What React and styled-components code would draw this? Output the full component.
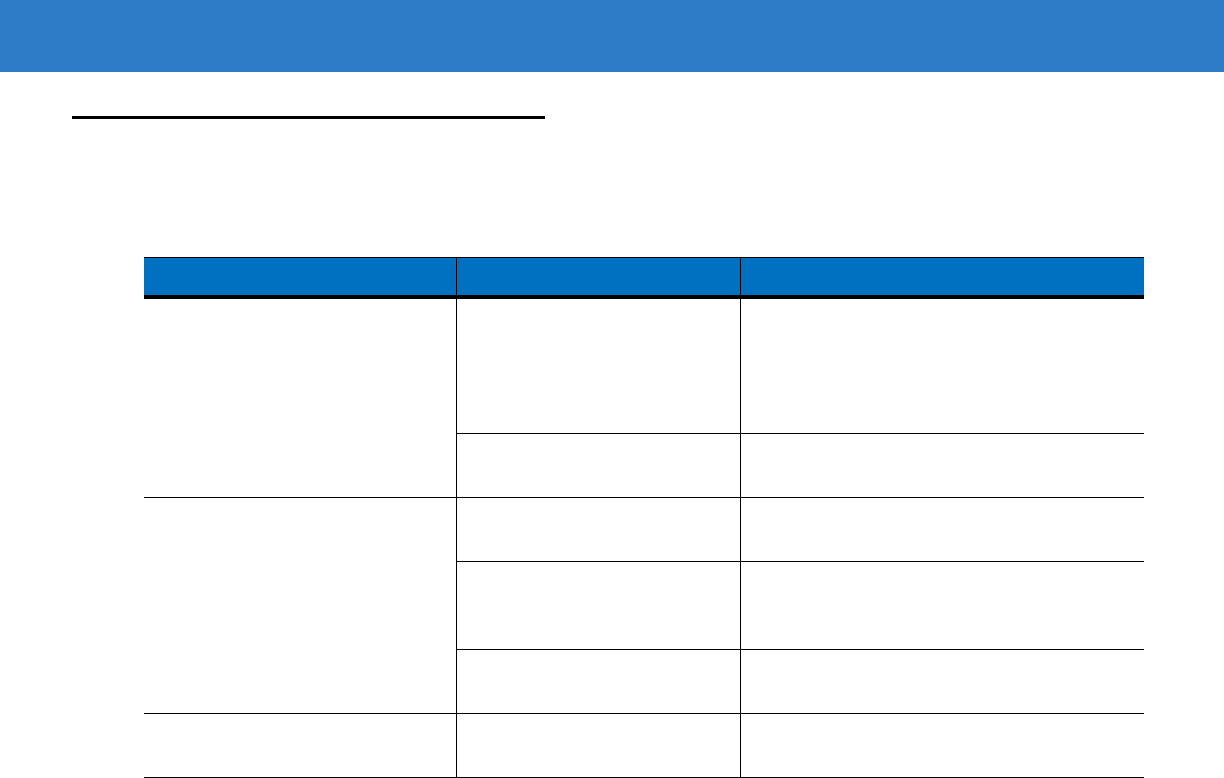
import React from "react";
import styled, { createGlobalStyle } from "styled-components";

const Global = createGlobalStyle`
  html, body { margin: 0; padding: 0; background: #ffffff; }
  body { font-family: "Liberation Sans", Arial, sans-serif; }
`;

const Banner = styled.header`
  height: 72px;
  background: #2e7bc8;
`;

const Content = styled.main`
  padding: 44px 0 0 72px;
`;

const TitleRule = styled.div`
  width: 473px;
  height: 3px;
  background: #000000;
  margin-bottom: 138px;
`;

const Table = styled.table`
  margin-left: 72px;
  width: 1000px;
  border-collapse: separate;
  border-spacing: 0;
  table-layout: fixed;
`;

const HeadCell = styled.th`
  box-sizing: border-box;
  height: 42px;
  padding: 0;
  background: #0070c0;
  border-top: 1px solid #000;
  border-bottom: 4px solid #000;
  border-left: ${(p) => (p.$first ? "none" : "1px solid #000")};
`;

const Cell = styled.td`
  box-sizing: border-box;
  padding: 0;
  vertical-align: top;
  border-bottom: 1px solid #000;
  border-left: ${(p) => (p.$first ? "none" : "1px solid #000")};
  height: ${(p) => (p.$h ? `${p.$h}px` : "auto")};
`;

const groups = [
  { rows: [135, 64] },
  { rows: [64, 88, 64] },
  { rows: [64] },
];

export default function App() {
  return (
    <>
      <Global />
      <Banner />
      <Content>
        <TitleRule />
        <Table>
          <colgroup>
            <col style={{ width: 312 }} />
            <col style={{ width: 284 }} />
            <col style={{ width: 404 }} />
          </colgroup>
          <thead>
            <tr>
              <HeadCell $first />
              <HeadCell />
              <HeadCell />
            </tr>
          </thead>
          <tbody>
            {groups.map((g, gi) =>
              g.rows.map((h, ri) => (
                <tr key={`${gi}-${ri}`}>
                  {ri === 0 && <Cell $first rowSpan={g.rows.length} />}
                  <Cell $h={h} />
                  <Cell $h={h} />
                </tr>
              ))
            )}
          </tbody>
        </Table>
      </Content>
    </>
  );
}
